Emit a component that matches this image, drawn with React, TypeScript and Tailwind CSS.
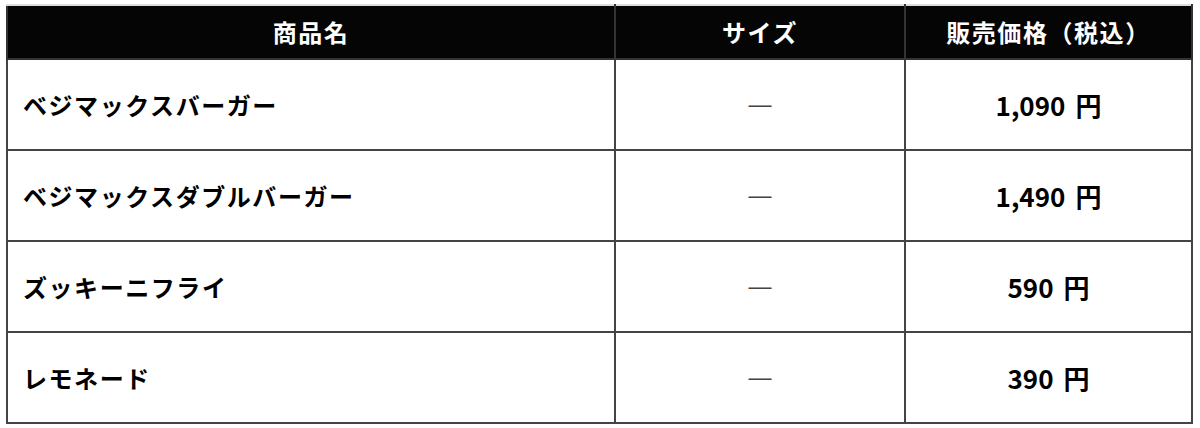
const rows = [
  { name: "ベジマックスバーガー", size: "—", price: "1,090" },
  { name: "ベジマックスダブルバーガー", size: "—", price: "1,490" },
  { name: "ズッキーニフライ", size: "—", price: "590" },
  { name: "レモネード", size: "—", price: "390" },
]

export default function App() {
  return (
    <div
      className="h-[428px] w-[1200px] bg-white pl-[6px] pt-[4px]"
      style={{ fontFamily: '"Noto Sans CJK JP", "Noto Sans", sans-serif' }}
    >
      <table className="w-[1187px] table-fixed border-collapse border-2 border-[#444] text-[24px] font-bold tracking-[0.065em] text-black">
        <colgroup>
          <col className="w-[608px]" />
          <col className="w-[290px]" />
          <col />
        </colgroup>
        <thead>
          <tr className="h-[54px] bg-[#050505] text-white">
            <th className="border-2 border-t-[#ddd] border-[#333] text-center">商品名</th>
            <th className="border-2 border-t-[#ddd] border-[#333] text-center">サイズ</th>
            <th className="border-2 border-t-[#ddd] border-[#333] text-center">販売価格（税込）</th>
          </tr>
        </thead>
        <tbody>
          {rows.map((row) => (
            <tr key={row.name} className="h-[91px]">
              <td className="border-2 border-[#444] pl-[15px] text-left">{row.name}</td>
              <td className="border-2 border-[#444] text-center font-['Liberation_Sans',sans-serif] text-[23px] font-normal tracking-normal text-[#444]">
                {row.size}
              </td>
              <td className="border-2 border-[#444] text-center text-[26px] tracking-normal">
                {row.price}
                <span className="ml-[10px]">円</span>
              </td>
            </tr>
          ))}
        </tbody>
      </table>
    </div>
  )
}
